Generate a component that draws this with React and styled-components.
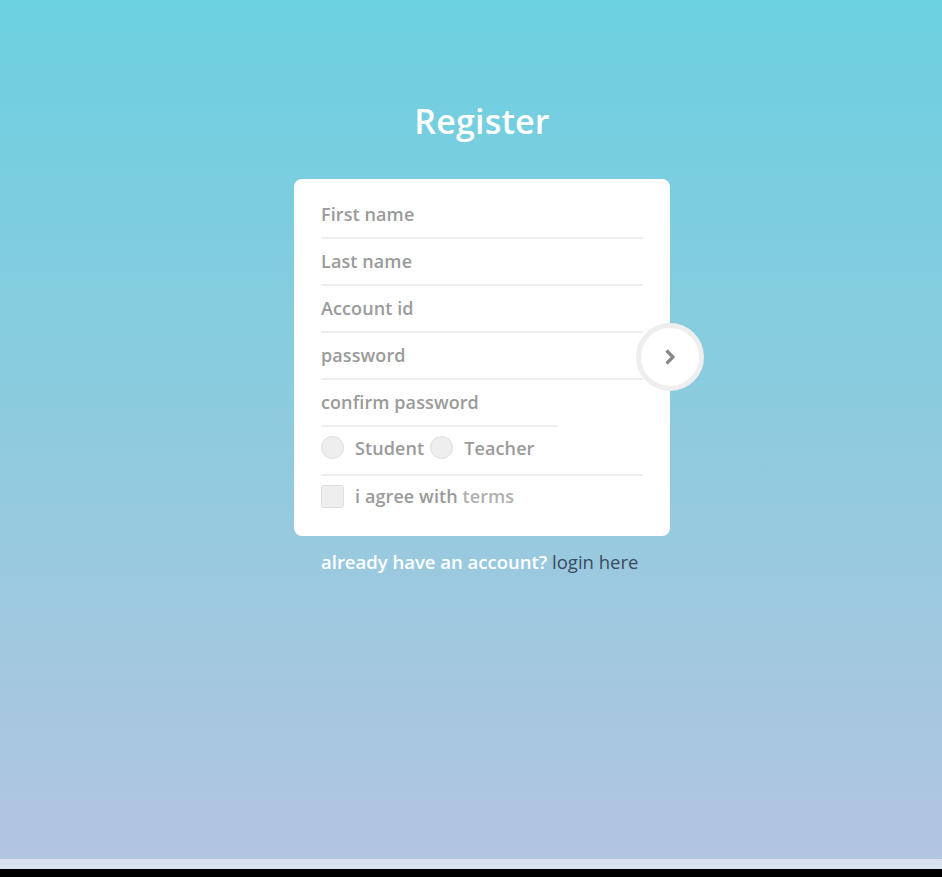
import React from "react";
import styled, { createGlobalStyle } from "styled-components";

const Global = createGlobalStyle`
  html, body { margin: 0; padding: 0; background: #000; }
  * { box-sizing: border-box; }
  body { font-family: "Open Sans", "Noto Sans", sans-serif; }
`;

const Page = styled.div`
  height: 859px;
  background: linear-gradient(to bottom, #6bd0df 0%, #8ecbdf 50%, #b3c5e0 100%);
  display: flex;
  flex-direction: column;
  align-items: center;
  padding-top: 97px;
  padding-left: 22px;
`;

const Strip = styled.div`
  height: 10px;
  background: #dae1ee;
`;

const Title = styled.h1`
  margin: 0;
  color: #fff;
  font-size: 34px;
  font-weight: 600;
  line-height: 48px;
  letter-spacing: 0.2px;
`;

const FormWrap = styled.div`
  position: relative;
  width: 376px;
  margin-top: 34px;
`;

const Card = styled.div`
  background: #fff;
  border-radius: 8px;
  padding: 13px 27px 20px;
  display: flex;
  flex-direction: column;
`;

const Input = styled.input`
  display: block;
  width: ${(p) => (p.$short ? "237px" : "100%")};
  height: 47px;
  border: none;
  border-bottom: 2px solid #eeeeee;
  padding: 0 0 2px;
  outline: none;
  font-family: inherit;
  font-size: 18px;
  font-weight: 600;
  letter-spacing: 0.1px;
  color: #999;
  background: transparent;
  &::placeholder { color: #9a9a9a; }
`;

const RadioRow = styled.div`
  height: 49px;
  display: flex;
  align-items: center;
  border-bottom: 2px solid #eeeeee;
  padding-bottom: 6px;
`;

const Choice = styled.label`
  display: flex;
  align-items: center;
  gap: 11px;
  font-size: 18px;
  font-weight: 600;
  letter-spacing: 0.1px;
  color: #9a9a9a;
  margin-right: 6px;
`;

const Radio = styled.span`
  width: 23px;
  height: 23px;
  border-radius: 50%;
  background: #eeeeee;
  border: 1px solid #dddddd;
  flex: none;
`;

const CheckRow = styled.div`
  height: 40px;
  display: flex;
  align-items: center;
  gap: 11px;
  font-size: 18px;
  font-weight: 600;
  letter-spacing: 0.1px;
  color: #9a9a9a;
`;

const Box = styled.span`
  width: 23px;
  height: 23px;
  border-radius: 3px;
  background: #eeeeee;
  border: 1px solid #dddddd;
  flex: none;
`;

const Terms = styled.span`
  color: #b0b0b0;
`;

const GoButton = styled.button`
  position: absolute;
  right: -34px;
  top: 144px;
  width: 68px;
  height: 68px;
  border-radius: 50%;
  background: #fff;
  border: 5px solid #eeeeee;
  display: flex;
  align-items: center;
  justify-content: center;
  padding: 0;
  cursor: pointer;
`;

const Footer = styled.p`
  margin: 13px 0 0;
  width: 376px;
  padding-left: 27px;
  font-size: 18.5px;
  font-weight: 600;
  color: #fff;
  white-space: nowrap;
`;

const Login = styled.a`
  color: #3b4a5e;
  font-weight: 400;
  text-decoration: none;
`;

export default function App() {
  return (
    <>
      <Global />
      <Page>
        <Title>Register</Title>
        <FormWrap>
          <Card>
            <Input placeholder="First name" />
            <Input placeholder="Last name" />
            <Input placeholder="Account id" />
            <Input placeholder="password" type="password" />
            <Input placeholder="confirm password" type="password" $short />
            <RadioRow>
              <Choice>
                <Radio />
                Student
              </Choice>
              <Choice>
                <Radio />
                Teacher
              </Choice>
            </RadioRow>
            <CheckRow>
              <Box />
              <span>
                i agree with <Terms>terms</Terms>
              </span>
            </CheckRow>
          </Card>
          <GoButton aria-label="submit">
            <svg width="12" height="18" viewBox="0 0 12 18">
              <path d="M2.5 2.5 L9 9 L2.5 15.5" fill="none" stroke="#888" strokeWidth="3.2" strokeLinejoin="miter" />
            </svg>
          </GoButton>
        </FormWrap>
        <Footer>
          already have an account? <Login href="#">login here</Login>
        </Footer>
      </Page>
      <Strip />
    </>
  );
}
